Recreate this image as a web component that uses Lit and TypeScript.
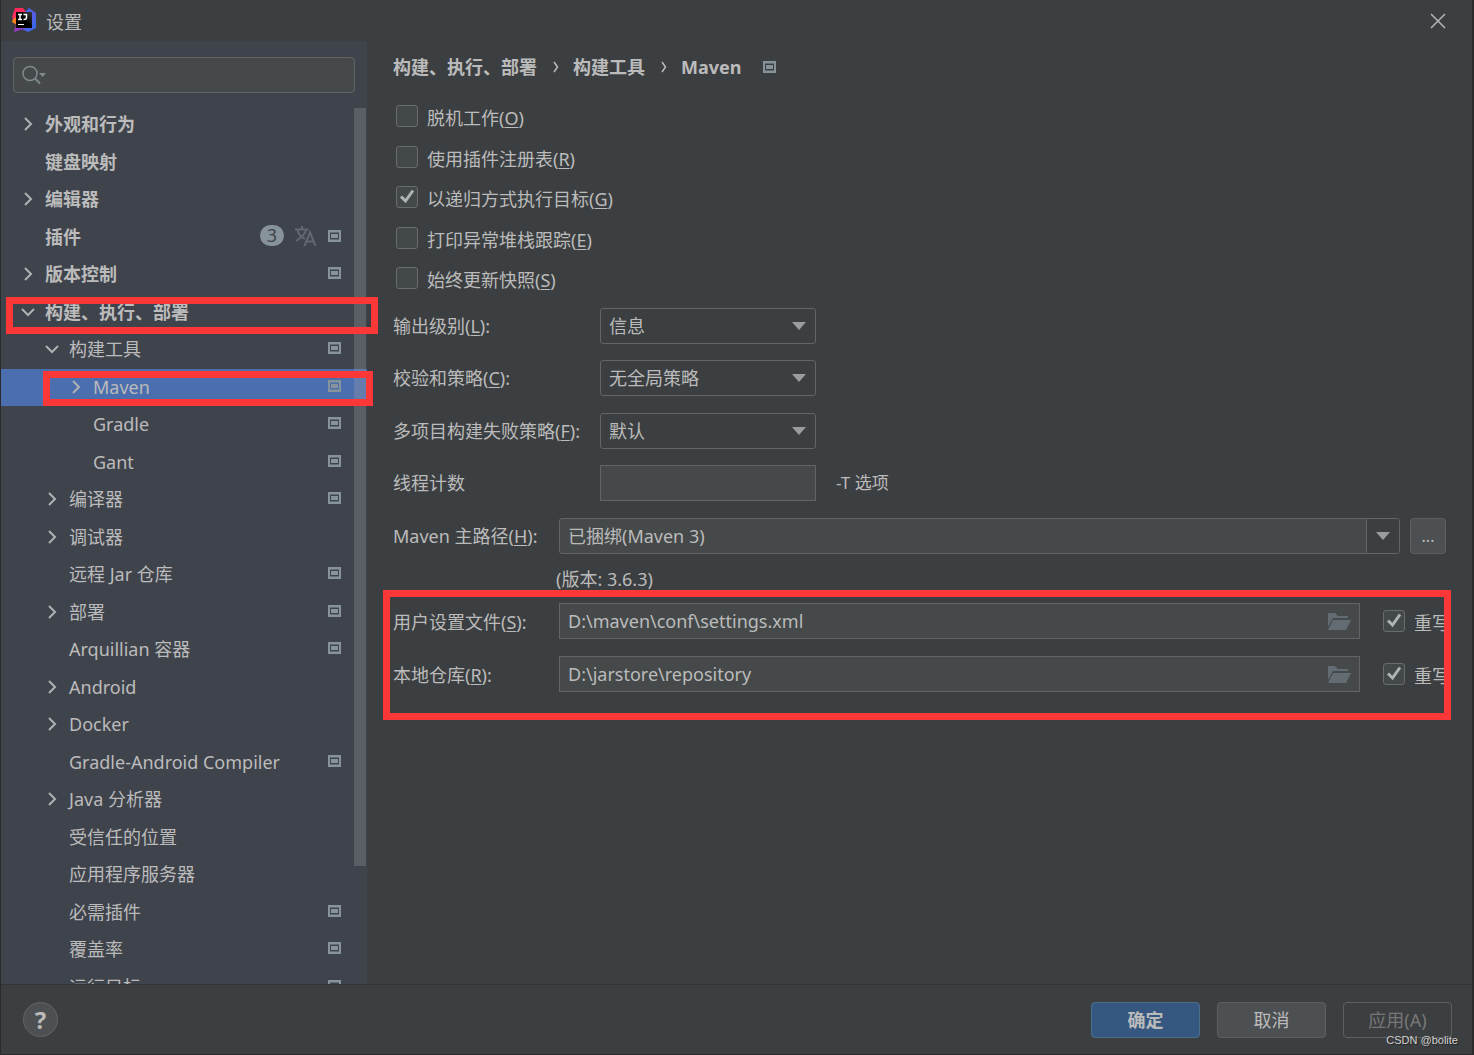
import { LitElement, html, css, svg, nothing } from "lit";
import { customElement, property } from "lit/decorators.js";
import { classMap } from "lit/directives/class-map.js";

interface TreeRow {
  label: string;
  level: number;
  arrow?: "open" | "closed";
  project?: boolean;
  badge?: number;
  selected?: boolean;
}

const TREE: TreeRow[] = [
  { label: "外观和行为", level: 0, arrow: "closed" },
  { label: "键盘映射", level: 0 },
  { label: "编辑器", level: 0, arrow: "closed" },
  { label: "插件", level: 0, project: true, badge: 3 },
  { label: "版本控制", level: 0, arrow: "closed", project: true },
  { label: "构建、执行、部署", level: 0, arrow: "open" },
  { label: "构建工具", level: 1, arrow: "open", project: true },
  { label: "Maven", level: 2, arrow: "closed", project: true, selected: true },
  { label: "Gradle", level: 2, project: true },
  { label: "Gant", level: 2, project: true },
  { label: "编译器", level: 1, arrow: "closed", project: true },
  { label: "调试器", level: 1, arrow: "closed" },
  { label: "远程 Jar 仓库", level: 1, project: true },
  { label: "部署", level: 1, arrow: "closed", project: true },
  { label: "Arquillian 容器", level: 1, project: true },
  { label: "Android", level: 1, arrow: "closed" },
  { label: "Docker", level: 1, arrow: "closed" },
  { label: "Gradle-Android Compiler", level: 1, project: true },
  { label: "Java 分析器", level: 1, arrow: "closed" },
  { label: "受信任的位置", level: 1 },
  { label: "应用程序服务器", level: 1 },
  { label: "必需插件", level: 1, project: true },
  { label: "覆盖率", level: 1, project: true },
  { label: "运行目标", level: 1, project: true },
];

const shared = css`
  * {
    box-sizing: border-box;
  }
  svg {
    display: block;
    flex: none;
  }
  button,
  input,
  select {
    font: inherit;
    color: inherit;
    margin: 0;
    padding: 0;
    border-radius: 0;
    outline: none;
  }
  u {
    text-underline-offset: 2px;
    text-decoration-thickness: 1px;
  }
`;

const projectIcon = html`<svg class="project" width="13" height="12" viewBox="0 0 13 12" aria-hidden="true">
  <path fill="#87939a" fill-rule="evenodd" d="M0 0H13V12H0ZM2 2.500V9.500H11V2.500Z" />
  <rect x="3" y="4" width="7" height="4" fill="#87939a" />
</svg>`;

const chevron = (dir: "open" | "closed") => html`<svg width="14" height="14" viewBox="0 0 14 14" fill="none" stroke="#afb1b3" stroke-width="2" aria-hidden="true">
  ${dir === "open" ? svg`<path d="M1 4L7 10L13 4" />` : svg`<path d="M4 1L10 7L4 13" />`}
</svg>`;

const mnemonic = (text: string, key: string, tail = "") => html`${text}(<u>${key}</u>)${tail}`;

@customElement("check-option")
export class CheckOption extends LitElement {
  @property() text = "";
  @property() key = "";
  @property({ type: Boolean }) checked = false;

  static styles = [
    shared,
    css`
      :host {
        display: block;
      }
      label {
        display: flex;
        align-items: center;
        gap: 9px;
        height: 22px;
        white-space: nowrap;
      }
      .box {
        display: grid;
        flex: none;
      }
      .box > * {
        grid-area: 1 / 1;
      }
      input {
        appearance: none;
        width: 22px;
        height: 22px;
        border: 1px solid #6b6b6b;
        border-radius: 3px;
        background: #43494a;
      }
      svg {
        pointer-events: none;
        visibility: hidden;
      }
      input:checked + svg {
        visibility: visible;
      }
      .text {
        padding-top: 3px;
      }
    `,
  ];

  render() {
    return html`<label>
      <span class="box">
        <input type="checkbox" .checked=${this.checked} />
        <svg width="22" height="22" viewBox="0 0 22 22" fill="none" stroke="#b0b2b3" stroke-width="3" aria-hidden="true">
          <path d="M5 10.5L9.5 15L17 4.5" />
        </svg>
      </span>
      <span class="text">${this.key ? mnemonic(this.text, this.key) : this.text}</span>
    </label>`;
  }
}

@customElement("settings-tree")
export class SettingsTree extends LitElement {
  static styles = [
    shared,
    css`
      :host {
        display: flex;
        flex-direction: column;
        min-height: 0;
        background: #3f434c;
      }
      .search {
        display: flex;
        align-items: center;
        height: 36px;
        margin: 16px 12px 13px;
        padding-left: 8px;
        border: 1px solid #646464;
        border-radius: 4px;
        background: #45494a;
      }
      .search input {
        flex: 1;
        min-width: 0;
        height: 100%;
        border: 0;
        background: transparent;
      }
      .view {
        flex: 1;
        min-height: 0;
        display: grid;
        grid-template-columns: minmax(0, 1fr);
        overflow: hidden;
      }
      .view > * {
        grid-area: 1 / 1;
      }
      ul {
        list-style: none;
        margin: 0;
        padding: 0;
        height: 0;
      }
      li {
        display: flex;
        align-items: center;
        height: 37px;
        padding-right: 26px;
        padding-bottom: 2px;
        white-space: nowrap;
      }
      li:nth-child(odd) {
        height: 38px;
      }
      .l0 {
        padding-left: 20px;
        font-weight: 700;
      }
      .l1 {
        padding-left: 44px;
      }
      .l2 {
        padding-left: 68px;
      }
      .selected {
        background: #4b6eaf;
      }
      .toggle {
        width: 24px;
        flex: none;
      }
      .label {
        flex: 1;
      }
      .project,
      .badge,
      .translate {
        margin-bottom: 2px;
      }
      .badge {
        width: 24px;
        height: 21px;
        border-radius: 11px;
        background: #87939a;
        color: #3f434c;
        font-weight: 400;
        line-height: 21px;
        text-align: center;
      }
      .translate {
        margin-left: 11px;
        margin-right: 12px;
      }
      .thumb {
        justify-self: end;
        width: 12px;
        height: 758px;
        margin: 2px 1px 0 0;
        background: rgba(166, 166, 166, 0.28);
      }
    `,
  ];

  render() {
    return html`
      <div class="search">
        <svg width="26" height="20" viewBox="0 0 26 20" fill="none" aria-hidden="true">
          <circle cx="8" cy="8.5" r="7" stroke="#7f8b91" stroke-width="1.5" />
          <path d="M13 13.5L18 18.5" stroke="#7f8b91" stroke-width="2" />
          <path d="M17 8H24L20.500 12Z" fill="#7f8b91" />
        </svg>
        <input type="text" aria-label="搜索" />
      </div>
      <div class="view">
        <ul>
          ${TREE.map(
            (row) => html`<li class=${classMap({ ["l" + row.level]: true, selected: !!row.selected })}>
              <span class="toggle">${row.arrow ? chevron(row.arrow) : nothing}</span>
              <span class="label">${row.label}</span>
              ${row.badge
                ? html`<span class="badge">${row.badge}</span>
                    <svg class="translate" width="21" height="20" viewBox="0 0 21 20" fill="none" stroke="#62686f" stroke-width="2" aria-hidden="true">
                      <path d="M0 3.500H13.500M7 0V3.500M2.500 4C3.500 8.500 7 11.500 10 13M11 4C10 9 5 12.500 1 15" />
                      <path d="M9.500 20L15 6.500L20.500 20M11.500 15.500H18.500" />
                    </svg>`
                : nothing}
              ${row.project ? projectIcon : nothing}
            </li>`,
          )}
        </ul>
        <div class="thumb"></div>
      </div>
    `;
  }
}

@customElement("app-root")
export class AppRoot extends LitElement {
  static styles = [
    shared,
    css`
      :host {
        position: relative;
        display: grid;
        grid-template: 41px minmax(0, 1fr) 70px / 366px minmax(0, 1fr);
        height: 100vh;
        box-sizing: border-box;
        border: 1px solid #2b2b2b;
        border-width: 0 2px 1px 1px;
        background: #3c3f41;
        color: #bbbbbb;
        font: 18px/24px "Noto Sans", "Noto Sans CJK SC", sans-serif;
        overflow: hidden;
      }
      header {
        grid-column: 1 / -1;
        display: flex;
        align-items: center;
        gap: 9px;
        padding: 0 26px 0 11px;
      }
      h1 {
        flex: 1;
        margin: 0;
        padding-top: 3px;
        font-size: 18px;
        font-weight: 400;
      }
      .close {
        border: 0;
        background: none;
      }
      main {
        padding: 13px 26px 0;
        min-width: 0;
      }
      .crumbs {
        display: flex;
        align-items: center;
        height: 25px;
        margin-bottom: 26px;
        font-weight: 700;
        white-space: nowrap;
      }
      .crumbs .sep {
        margin: 0 14px 0 16px;
      }
      .crumbs .project {
        margin-left: 22px;
      }
      .options {
        padding-left: 3px;
      }
      .options check-option {
        height: 41px;
      }
      .options check-option:nth-child(even) {
        height: 40px;
      }
      .field {
        display: flex;
        align-items: center;
        height: 36px;
        margin-bottom: 16px;
      }
      .field.wide-gap {
        margin-bottom: 17px;
      }
      .field > label {
        flex: none;
        width: 207px;
        white-space: nowrap;
      }
      .field.path > label {
        width: 166px;
      }
      .file-row > label {
        padding-top: 2px;
      }
      .select {
        display: grid;
        align-items: center;
        width: 216px;
      }
      .select > * {
        grid-area: 1 / 1;
      }
      .select svg {
        justify-self: end;
        margin-right: 10px;
        pointer-events: none;
      }
      select,
      .text {
        height: 36px;
        padding: 0 8px;
        border: 1px solid #646464;
      }
      select {
        appearance: none;
        border-radius: 3px;
        background: #3c3f41;
      }
      .text {
        width: 216px;
        background: #45494a;
      }
      .hint {
        margin-left: 20px;
        font-size: 17px;
      }
      .combo,
      .file {
        flex: 1;
        display: flex;
        min-width: 0;
        height: 36px;
        border: 1px solid #646464;
        background: #45494a;
      }
      .combo {
        border-radius: 3px;
        overflow: hidden;
      }
      .combo input,
      .file input {
        flex: 1;
        min-width: 0;
        padding: 0 8px;
        border: 0;
        background: transparent;
      }
      .combo button {
        display: grid;
        place-items: center;
        width: 33px;
        border: 0;
        border-left: 1px solid #646464;
        background: #3c3f41;
      }
      .file button {
        display: grid;
        place-items: center;
        width: 40px;
        border: 0;
        background: none;
      }
      .more {
        width: 36px;
        height: 36px;
        margin-left: 10px;
        border: 1px solid #5e6060;
        border-radius: 4px;
        background: #4c5052;
        font-size: 16px;
      }
      .note {
        height: 33px;
        margin: 0 0 0 163px;
        line-height: 18px;
      }
      .file + check-option {
        width: 63px;
        margin-left: 23px;
      }
      footer {
        grid-column: 1 / -1;
        display: flex;
        align-items: center;
        gap: 17px;
        padding: 0 20px 0 22px;
        border-top: 1px solid #323435;
      }
      .help {
        display: grid;
        place-items: center;
        width: 35px;
        height: 35px;
        margin-right: auto;
        border: 1px solid #646464;
        border-radius: 50%;
        background: #4c5052;
        font-size: 24px;
        font-weight: 700;
      }
      .action {
        width: 109px;
        height: 36px;
        border: 1px solid #5e6060;
        border-radius: 4px;
        background: #4c5052;
      }
      .primary {
        border-color: #4c708c;
        background: #365880;
        font-weight: 700;
      }
      .action:disabled {
        background: none;
        color: #777777;
      }
      .mark {
        position: absolute;
        border: 7px solid #fc3737;
        pointer-events: none;
      }
      .mark-group {
        left: 5px;
        top: 297px;
        width: 372px;
        height: 37px;
      }
      .mark-item {
        left: 42px;
        top: 371px;
        width: 330px;
        height: 35px;
      }
      .mark-paths {
        left: 382px;
        right: 21px;
        top: 590px;
        height: 130px;
      }
      .watermark {
        position: absolute;
        right: 14px;
        bottom: 6px;
        color: #d2d2d2;
        font: 11px/16px "Liberation Sans", sans-serif;
        text-shadow: 1px 1px 1px #222222;
      }
    `,
  ];

  private arrow() {
    return html`<svg width="14" height="8" viewBox="0 0 14 8" aria-hidden="true"><path d="M0 0H14L7 8Z" fill="#9a9da0" /></svg>`;
  }

  private separator() {
    return html`<svg class="sep" width="6" height="12" viewBox="0 0 6 12" fill="none" stroke="#bbbbbb" stroke-width="1.5" aria-hidden="true"><path d="M1 1L4.500 6L1 11" /></svg>`;
  }

  private select(id: string, text: string, key: string, value: string, wide: boolean) {
    return html`<div class=${classMap({ field: true, "wide-gap": wide })}>
      <label for=${id}>${mnemonic(text, key, ":")}</label>
      <span class="select"><select id=${id}><option>${value}</option></select>${this.arrow()}</span>
    </div>`;
  }

  private file(id: string, text: string, key: string, value: string) {
    return html`<div class="field path file-row wide-gap">
      <label for=${id}>${mnemonic(text, key, ":")}</label>
      <span class="file">
        <input id=${id} type="text" .value=${value} />
        <button type="button" aria-label="浏览">
          <svg width="23" height="17" viewBox="0 0 23 17" fill="#626c72" aria-hidden="true">
            <path d="M0 0H7L10 3H20V5H5L0 14Z" />
            <path d="M5 7H23L18 17H0Z" />
          </svg>
        </button>
      </span>
      <check-option text="重写" checked></check-option>
    </div>`;
  }

  render() {
    return html`
      <header>
        <svg width="25" height="25" viewBox="0 0 25 25" aria-hidden="true">
          <defs>
            <linearGradient id="b" x1="0" y1="0" x2="1" y2="1"><stop offset="0" stop-color="#1e7df5" /><stop offset=".5" stop-color="#5a5ce0" /><stop offset="1" stop-color="#2b6cf0" /></linearGradient>
            <linearGradient id="r" x1="0" y1="0" x2="0" y2="1"><stop offset="0" stop-color="#fe2857" /><stop offset=".6" stop-color="#f2356b" /><stop offset="1" stop-color="#9b35c8" /></linearGradient>
            <linearGradient id="k" x1="0" y1="1" x2="1" y2="0"><stop offset=".5" stop-color="#000000" /><stop offset="1" stop-color="#3a3a3a" /></linearGradient>
          </defs>
          <path d="M13 4L17 0L24 5V20L16 24L8 20Z" fill="url(#b)" />
          <path d="M3 0H11L14 4L8 22L2 24L4 17L0 9Z" fill="url(#r)" />
          <path d="M1 11L5 9V17L0 14Z" fill="#fc801d" />
          <path d="M2 23L5 18H10L12 21Z" fill="#9039d0" />
          <rect x="4" y="4" width="16" height="16" fill="url(#k)" />
          <path d="M6 6.500H10M8 6.500V12M6 11.500H10M11.500 6.500H14.500V10Q14.500 11.500 11.500 11.500" fill="none" stroke="#ffffff" stroke-width="1.500" />
          <rect x="6" y="16" width="6" height="1" fill="#ffffff" />
        </svg>
        <h1>设置</h1>
        <button class="close" type="button" aria-label="关闭">
          <svg width="16" height="16" viewBox="0 0 16 16" stroke="#b4b5b6" stroke-width="1.500" aria-hidden="true"><path d="M1 1L15 15M15 1L1 15" /></svg>
        </button>
      </header>
      <settings-tree></settings-tree>
      <main>
        <nav class="crumbs">
          <span>构建、执行、部署</span>${this.separator()}<span>构建工具</span>${this.separator()}<span>Maven</span>${projectIcon}
        </nav>
        <div class="options">
          <check-option text="脱机工作" key="O"></check-option>
          <check-option text="使用插件注册表" key="R"></check-option>
          <check-option text="以递归方式执行目标" key="G" checked></check-option>
          <check-option text="打印异常堆栈跟踪" key="E"></check-option>
          <check-option text="始终更新快照" key="S"></check-option>
        </div>
        ${this.select("level", "输出级别", "L", "信息", false)}
        ${this.select("checksum", "校验和策略", "C", "无全局策略", true)}
        ${this.select("fail", "多项目构建失败策略", "F", "默认", false)}
        <div class="field wide-gap">
          <label for="threads">线程计数</label>
          <input id="threads" class="text" type="text" />
          <span class="hint">-T 选项</span>
        </div>
        <div class="field path">
          <label for="home">${mnemonic("Maven 主路径", "H", ":")}</label>
          <span class="combo">
            <input id="home" type="text" .value=${"已捆绑(Maven 3)"} />
            <button type="button" aria-label="展开">${this.arrow()}</button>
          </span>
          <button class="more" type="button">...</button>
        </div>
        <p class="note">(版本: 3.6.3)</p>
        ${this.file("settings", "用户设置文件", "S", "D:\\maven\\conf\\settings.xml")}
        ${this.file("repo", "本地仓库", "R", "D:\\jarstore\\repository")}
      </main>
      <footer>
        <button class="help" type="button" aria-label="帮助">?</button>
        <button class="action primary" type="button">确定</button>
        <button class="action" type="button">取消</button>
        <button class="action" type="button" disabled>应用(A)</button>
      </footer>
      <div class="mark mark-group"></div>
      <div class="mark mark-item"></div>
      <div class="mark mark-paths"></div>
      <div class="watermark">CSDN @bolite</div>
    `;
  }
}
